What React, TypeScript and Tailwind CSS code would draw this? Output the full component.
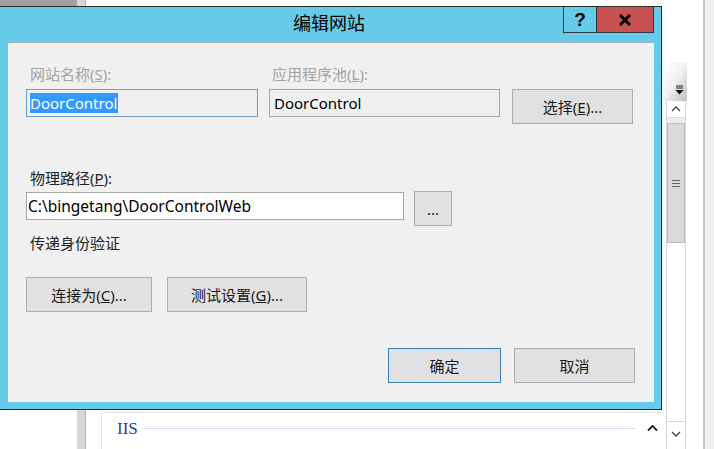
function TitleButtons() {
  return (
    <div className="flex h-[26px] border-x border-b border-[#2e3640]">
      <div className="flex w-[33px] items-center justify-center border-r border-[#2e3640] pb-[1px] text-[19px] font-bold leading-none text-black font-[family-name:'Liberation_Sans',sans-serif]">
        ?
      </div>
      <div className="flex w-[56px] items-center justify-center bg-[#c75050]">
        <svg width="14" height="12" viewBox="0 0 14 12">
          <path d="M2 1 L12 11 M12 1 L2 11" stroke="#000" strokeWidth="3" />
        </svg>
      </div>
    </div>
  );
}

function Btn({ children, wide, primary }: { children: React.ReactNode; wide: string; primary?: boolean }) {
  return (
    <div
      className={
        "flex h-[35px] items-center justify-center border bg-[#e1e1e1] text-[15px] text-[#1a1a1a] " +
        wide +
        (primary ? " border-[#3c7fb1]" : " border-[#adadad]")
      }
    >
      {children}
    </div>
  );
}

function Dialog() {
  return (
    <div className="absolute left-0 top-[6px] flex h-[404px] w-[662px] flex-col border-y border-r border-[#2b2b2b] bg-[#65cbe9]">
      {/* title bar */}
      <div className="flex h-[35px] shrink-0">
        <div className="flex flex-1 justify-center pl-[95px] pt-[3px] text-[18px] leading-[26px] text-black">
          编辑网站
        </div>
        <TitleButtons />
        <div className="w-[7px]" />
      </div>

      {/* client */}
      <div className="ml-[8px] mr-[7px] flex h-[360px] flex-col border-t border-[#9fb2c0] bg-[#f0f0f0] pl-[18px] pt-[21px] text-[15px] leading-[20px]">
        <div className="flex items-start">
          <div className="w-[232px]">
            <div className="pl-[4px] text-[#a3a3a3]">
              网站名称(<u>S</u>):
            </div>
            <div className="mt-[5px] flex h-[28px] items-center border border-[#7499c0] bg-[#f0f0f0] pl-[3px]">
              <span className="bg-[#3399ff] text-white">DoorControl</span>
              <span className="h-[20px] w-[1px] bg-[#c0702a]" />
            </div>
          </div>
          <div className="ml-[11px] w-[231px]">
            <div className="pl-[3px] text-[#a3a3a3]">
              应用程序池(<u>L</u>):
            </div>
            <div className="mt-[5px] flex h-[28px] items-center border border-[#a6a6a6] pl-[4px] text-black">
              DoorControl
            </div>
          </div>
          <div className="ml-[12px] mt-[25px]">
            <Btn wide="w-[121px]">
              选择(<u>E</u>)...
            </Btn>
          </div>
        </div>

        <div className="mt-[44px] pl-[4px] text-[#222]">
          物理路径(<u>P</u>):
        </div>
        <div className="mt-[3px] flex items-start">
          <div className="mt-[1px] flex h-[28px] w-[378px] items-center border border-[#a6a6a6] bg-white pl-[1px] text-[15.5px] text-black">
            C:\bingetang\DoorControlWeb
          </div>
          <div className="ml-[10px]">
            <Btn wide="w-[38px] h-[34px]">...</Btn>
          </div>
        </div>

        <div className="mt-[7px] pl-[4px] text-[#222]">传递身份验证</div>

        <div className="mt-[24px] flex gap-[15px]">
          <Btn wide="w-[126px]">
            连接为(<u>C</u>)...
          </Btn>
          <Btn wide="w-[140px]">
            测试设置(<u>G</u>)...
          </Btn>
        </div>

        <div className="mt-[36px] flex justify-end gap-[13px] pr-[19px]">
          <Btn wide="w-[113px]" primary>
            确定
          </Btn>
          <Btn wide="w-[121px]">取消</Btn>
        </div>
      </div>
    </div>
  );
}

export default function App() {
  return (
    <div className="relative flex h-[449px] w-[714px] overflow-hidden bg-white font-[family-name:'Noto_Sans','Noto_Sans_CJK_SC',sans-serif]">
      {/* desktop behind the dialog */}
      <div className="flex w-[77px] flex-col">
        <div className="h-[8px] bg-[#a0a0a0]" />
        <div className="flex-1 bg-white" />
      </div>
      <div className="w-[9px] border-r border-[#b4b4b4] bg-[#d7d7d7]" />
      <div className="flex w-[576px] flex-col justify-end">
        <div className="ml-[15px] flex h-[37px] items-start border-l border-t border-[#e4e4e4] pl-[15px] pt-[6px]">
          <span className="text-[17px] leading-[20px] text-[#26409a] font-[family-name:'Liberation_Serif',serif]">
            IIS
          </span>
          <div className="ml-[5px] mt-[9px] h-[1px] w-[493px] bg-[#d6e0f3]" />
          <svg className="ml-[11px] mt-[5px]" width="11" height="8" viewBox="0 0 11 8">
            <path d="M1 6.5 L5.5 2 L10 6.5" fill="none" stroke="#222" strokeWidth="1.8" />
          </svg>
        </div>
      </div>
      <div className="flex w-[41px] flex-col pt-[63px]">
        <div className="relative h-[38px] w-[25px] bg-gradient-to-br from-white via-[#f2f2f2] to-[#bdbdbd]">
          <svg className="absolute left-[13px] top-[22px]" width="9" height="10" viewBox="0 0 9 10">
            <path d="M1 1 H8 M1 3 H8" stroke="#222" strokeWidth="1" />
            <path d="M0.5 5 H8.5 L4.5 9.5 Z" fill="#111" />
          </svg>
        </div>
        <div className="ml-[4px] flex w-[20px] flex-1 flex-col border-x border-[#d8d8d8] pb-[3px]">
          <div className="flex h-[17px] items-center justify-center border-b border-[#d8d8d8] bg-white">
            <svg width="10" height="6" viewBox="0 0 10 6">
              <path d="M1 5 L5 1 L9 5" fill="none" stroke="#444" strokeWidth="1.4" />
            </svg>
          </div>
          <div className="h-[5px] bg-[#ececec]" />
          <div className="flex h-[120px] flex-col items-center justify-center gap-[2px] border border-[#bcbcbc] bg-[#dadada]">
            <div className="h-[1px] w-[8px] bg-[#666]" />
            <div className="h-[1px] w-[8px] bg-[#666]" />
            <div className="h-[1px] w-[8px] bg-[#666]" />
          </div>
          <div className="flex-1 bg-white" />
          <div className="flex h-[25px] items-center justify-center border-t border-[#d8d8d8] bg-white">
            <svg width="10" height="6" viewBox="0 0 10 6">
              <path d="M1 1 L5 5 L9 1" fill="none" stroke="#444" strokeWidth="1.4" />
            </svg>
          </div>
        </div>
      </div>
      <div className="w-[2px] bg-[#c6c6c6]" />
      <div className="flex-1 bg-[#efefef]" />

      <Dialog />
    </div>
  );
}
